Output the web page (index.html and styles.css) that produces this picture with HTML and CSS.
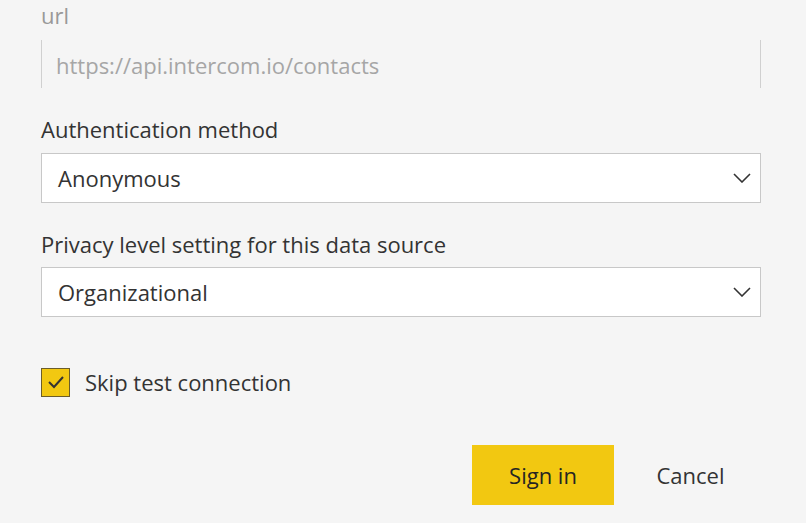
FILE: index.html
```html
<!DOCTYPE html>
<html lang="en">
<head>
<meta charset="UTF-8">
<meta name="viewport" content="width=device-width, initial-scale=1.0">
<title>Web connector</title>
<link rel="stylesheet" href="styles.css">
</head>
<body>
  <div class="form">
    <div class="url-label">url</div>
    <div class="url-box">https://api.intercom.io/contacts</div>

    <div class="field-label">Authentication method</div>
    <div class="select">
      <span>Anonymous</span>
      <svg class="chevron" width="18" height="10" viewBox="0 0 18 10"><path d="M1 1 L9 9 L17 1" fill="none" stroke="#333" stroke-width="1.6"/></svg>
    </div>

    <div class="field-label second">Privacy level setting for this data source</div>
    <div class="select">
      <span>Organizational</span>
      <svg class="chevron" width="18" height="10" viewBox="0 0 18 10"><path d="M1 1 L9 9 L17 1" fill="none" stroke="#333" stroke-width="1.6"/></svg>
    </div>

    <div class="check-row">
      <div class="checkbox">
        <svg width="20" height="16" viewBox="0 0 20 16"><path d="M3 8 L8 13 L17 3" fill="none" stroke="#333" stroke-width="2"/></svg>
      </div>
      <span>Skip test connection</span>
    </div>

    <div class="buttons">
      <button class="btn primary">Sign in</button>
      <button class="btn">Cancel</button>
    </div>
  </div>
</body>
</html>
```

FILE: styles.css
```css
body {
  margin: 0;
  background: #f5f5f5;
  font-family: "Open Sans", "Noto Sans", sans-serif;
  font-size: 22px;
  color: #333;
}
.form {
  width: 720px;
  margin-left: 41px;
}
.url-label {
  line-height: 31px;
  height: 40px;
  color: #999;
}
.url-box {
  height: 48px;
  box-sizing: border-box;
  border-left: 1px solid #d0d0d0;
  border-right: 1px solid #d0d0d0;
  padding-left: 14px;
  line-height: 50px;
  color: #a6a6a6;
}
.field-label {
  margin-top: 22px;
  height: 43px;
  line-height: 39px;
}
.field-label.second {
  margin-top: 23px;
  height: 41px;
  line-height: 37px;
}
.select {
  height: 50px;
  box-sizing: border-box;
  background: #fff;
  border: 1px solid #c8c8c8;
  display: flex;
  align-items: center;
  justify-content: space-between;
  padding: 0 9px 0 16px;
}
.chevron {
  display: block;
}
.check-row {
  margin-top: 50px;
  height: 30px;
  display: flex;
  align-items: center;
  gap: 15px;
}
.checkbox {
  width: 29px;
  height: 29px;
  box-sizing: border-box;
  background: #f2c811;
  border: 1px solid #6b5d2a;
  display: flex;
  align-items: center;
  justify-content: center;
}
.checkbox svg {
  display: block;
}
.buttons {
  margin-top: 48px;
  display: flex;
  justify-content: flex-end;
  gap: 6px;
}
.btn {
  width: 141px;
  height: 60px;
  border: none;
  background: transparent;
  font-family: inherit;
  font-size: 22px;
  color: #333;
  padding: 0;
}
.btn.primary {
  width: 142px;
  background: #f2c811;
  color: #252423;
}
```
